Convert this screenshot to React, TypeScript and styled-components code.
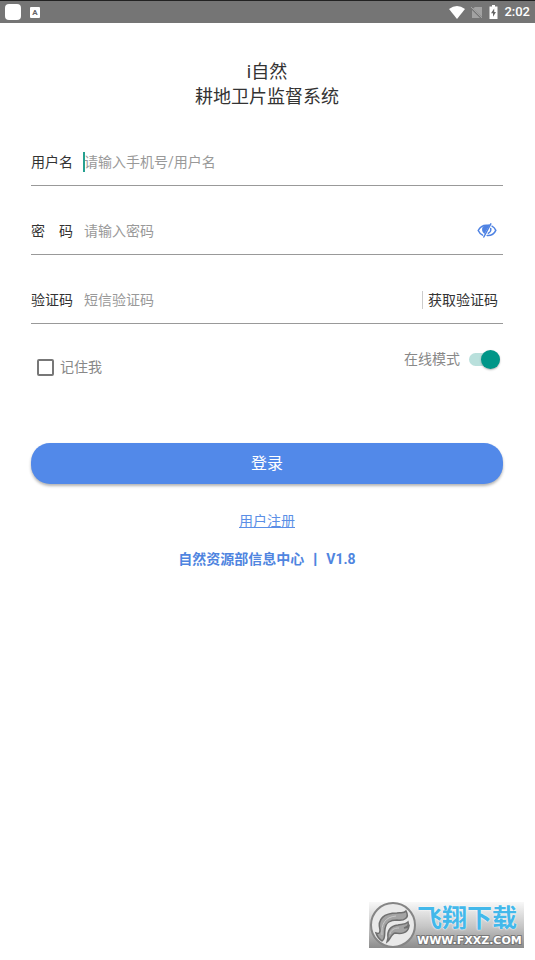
import React, { useState } from 'react';
import styled, { createGlobalStyle } from 'styled-components';

const GlobalStyle = createGlobalStyle`
  *, *::before, *::after { box-sizing: border-box; }
  body {
    margin: 0;
    background: #fff;
    color: #333;
    font: 14px/20px Roboto, "Noto Sans CJK SC", sans-serif;
  }
  button, input { font: inherit; color: inherit; }
`;

const Screen = styled.div`
  position: relative;
  display: flex;
  flex-direction: column;
  min-height: 100vh;
`;

const StatusBar = styled.header`
  display: flex;
  align-items: center;
  justify-content: space-between;
  height: 23px;
  padding: 0 5px;
  border-top: 1px solid #222;
  background: #757575;
  color: #fff;
`;

const StatusGroup = styled.div<{ $gap: number }>`
  display: flex;
  align-items: center;
  gap: ${({ $gap }) => $gap}px;
`;

const AppBadge = styled.span`
  width: 16px;
  height: 16px;
  border-radius: 4px;
  background: #fff;
`;

const LetterBadge = styled.span`
  width: 10px;
  height: 11px;
  border-radius: 1px;
  background: #fff;
  color: #666;
  font-size: 8px;
  font-weight: 700;
  line-height: 11px;
  text-align: center;
`;

const Clock = styled.time`
  font-size: 13px;
  font-weight: 500;
`;

const Main = styled.main`
  display: flex;
  flex-direction: column;
  padding: 36px 32px 32px 31px;
`;

const Title = styled.h1`
  margin: 0 0 30px;
  font-size: 18px;
  font-weight: 400;
  line-height: 25px;
  text-align: center;
`;

const Form = styled.form`
  display: flex;
  flex-direction: column;
`;

const Row = styled.div`
  display: flex;
  align-items: center;
  height: 47px;
  margin-bottom: 22px;
  border-bottom: 1px solid #999;
`;

const RowLabel = styled.label`
  flex: none;
  width: 52px;
  white-space: pre;
`;

const InputWrap = styled.div<{ $active?: boolean }>`
  position: relative;
  flex: 1;
  min-width: 0;
  &::before {
    content: '';
    display: ${({ $active }) => ($active ? 'block' : 'none')};
    position: absolute;
    left: 0;
    top: 0;
    width: 2px;
    height: 20px;
    background: #26a090;
  }
`;

const Input = styled.input`
  display: block;
  width: 100%;
  height: 20px;
  padding: 0 0 0 1px;
  border: 0;
  outline: 0;
  background: transparent;
  &::placeholder { color: #999; opacity: 1; }
`;

const IconButton = styled.button`
  display: flex;
  padding: 0;
  margin-right: 6px;
  border: 0;
  background: none;
  cursor: pointer;
`;

const CodeButton = styled.button`
  height: 18px;
  padding: 0 5px;
  border: 0;
  border-left: 1px solid #ccc;
  background: none;
  line-height: 18px;
  cursor: pointer;
`;

const Options = styled.div`
  display: flex;
  align-items: flex-start;
  justify-content: space-between;
  margin: 3px 3px 66px 6px;
  color: #888;
`;

const Option = styled.label<{ $drop?: boolean }>`
  display: flex;
  align-items: center;
  gap: ${({ $drop }) => ($drop ? 6 : 9)}px;
  padding-top: ${({ $drop }) => ($drop ? 8 : 0)}px;
`;

const Checkbox = styled.input`
  appearance: none;
  width: 17px;
  height: 17px;
  margin: 0;
  border: 2px solid #777;
  border-radius: 2px;
  &:checked { border-color: #009688; background: #009688; }
`;

const Switch = styled.input`
  appearance: none;
  display: flex;
  align-items: center;
  width: 31px;
  height: 13px;
  margin: 0;
  border-radius: 7px;
  background: #b9e0dc;
  &::before {
    content: '';
    flex: none;
    width: 19px;
    height: 19px;
    border-radius: 50%;
    background: #999;
    box-shadow: 0 1px 2px rgba(0, 0, 0, 0.3);
  }
  &:checked { justify-content: flex-end; }
  &:checked::before { background: #009688; }
`;

const LoginButton = styled.button`
  height: 41px;
  border: 0;
  border-radius: 19px;
  background: #5289e9;
  box-shadow: 0 2px 3px rgba(0, 0, 0, 0.3);
  color: #fff;
  font-size: 16px;
  cursor: pointer;
`;

const RegisterLink = styled.a`
  align-self: center;
  margin-top: 27px;
  color: #5b8fe6;
`;

const Copyright = styled.footer`
  display: flex;
  justify-content: center;
  gap: 4px;
  margin-top: 18px;
  color: #4f85e0;
  font-weight: 700;
`;

const Watermark = styled.aside`
  position: absolute;
  right: 11px;
  bottom: 12px;
  display: flex;
  align-items: center;
  width: 155px;
  height: 46px;
  background: linear-gradient(#f8f8f8, #c4c4c4 55%, #8c8c8c);
`;

const WatermarkText = styled.div`
  display: flex;
  flex-direction: column;
  white-space: nowrap;
`;

const SiteName = styled.span`
  color: #43b8ea;
  font-size: 25px;
  font-weight: 700;
  line-height: 32px;
  text-shadow: 0 0 2px #fff, 0 0 1px #fff;
`;

const SiteUrl = styled.span`
  color: #fff;
  font: 700 11px/12px "DejaVu Sans", sans-serif;
  paint-order: stroke fill;
  -webkit-text-stroke: 2px #777;
`;

const WifiIcon = () => (
  <svg width="16" height="13" viewBox="0 0 16 13" aria-hidden="true">
    <path d="M0 3Q8-3 16 3L8 13Z" fill="#fff" />
  </svg>
);

const NoSimIcon = () => (
  <svg width="12" height="13" viewBox="0 0 12 13" aria-hidden="true">
    <path d="M4 1h7v10L2 2.500zM1 4l8 8H1z" fill="#a2a2a2" />
    <path d="M0 1l11 11" stroke="#a2a2a2" strokeWidth="1" />
  </svg>
);

const BatteryIcon = () => (
  <svg width="9" height="14" viewBox="0 0 9 14" aria-hidden="true">
    <path d="M3 0h3v1.500h2.500V14h-8V1.500H3z" fill="#fff" />
    <path d="M5.200 3.500 2 8.300h2v3.500L7 7H5.200z" fill="#666" />
  </svg>
);

const EyeOffIcon = () => (
  <svg width="20" height="16" viewBox="0 0 20 16" fill="none" stroke="#4f83e3" strokeWidth="1.500" strokeLinecap="round" aria-hidden="true">
    <path d="M11.500 2.300C7 1.600 3 3.800 1.200 7.500c1 2.200 2.400 3.600 4.400 4.600" />
    <path d="M15 3.200c1.700.9 3 2.300 3.800 4.200-1.600 3.600-5 5.400-8.600 5.200" />
    <path d="M13.800.9 6.800 14" />
    <path d="M6.300 4.200c-.8 2-.6 4 1 5.600L11.600 2.600z" fill="#4f83e3" />
    <path d="M13.700 5.500c.4 2-.6 3.900-2.400 4.700" />
  </svg>
);

const Emblem = () => (
  <svg width="48" height="46" viewBox="0 0 48 46" aria-hidden="true">
    <circle cx="24" cy="23" r="22" fill="#e9e9e9" stroke="#858585" strokeWidth="2" />
    <path d="M7 31c1 3 3 6 6 8 4-3 2-7 3-12 1-7 5-9 12-9 7 1 13-2 9-9-2 3-6 1-9 2C15 11 8 17 11 28c0 3-1 4-4 3z" fill="#a3a3a3" stroke="#6f6f6f" strokeWidth="1.500" />
    <path d="M18 40c3-2 4-8 8-9 5 1 13 1 14-7-2 2-3 2-5 2 4-1 5-3 4-6-3 3-7 2-10 3-8 1-11 6-10 13z" fill="#a3a3a3" stroke="#6f6f6f" strokeWidth="1.500" />
    <path d="M13 33c-1-11 3-18 14-19M21 32c1-4 4-6 9-6" fill="none" stroke="#c8c8c8" />
  </svg>
);

export default function App() {
  const [visible, setVisible] = useState(false);
  return (
    <>
      <GlobalStyle />
      <Screen>
        <StatusBar>
          <StatusGroup $gap={9}>
            <AppBadge />
            <LetterBadge>A</LetterBadge>
          </StatusGroup>
          <StatusGroup $gap={6}>
            <WifiIcon />
            <NoSimIcon />
            <BatteryIcon />
            <Clock>2:02</Clock>
          </StatusGroup>
        </StatusBar>
        <Main>
          <Title>
            i自然
            <br />
            耕地卫片监督系统
          </Title>
          <Form onSubmit={(e) => e.preventDefault()}>
            <Row>
              <RowLabel htmlFor="user">用户名</RowLabel>
              <InputWrap $active>
                <Input id="user" placeholder="请输入手机号/用户名" />
              </InputWrap>
            </Row>
            <Row>
              <RowLabel htmlFor="password">密　码</RowLabel>
              <InputWrap>
                <Input id="password" type={visible ? 'text' : 'password'} placeholder="请输入密码" />
              </InputWrap>
              <IconButton type="button" aria-label="显示密码" onClick={() => setVisible(!visible)}>
                <EyeOffIcon />
              </IconButton>
            </Row>
            <Row>
              <RowLabel htmlFor="code">验证码</RowLabel>
              <InputWrap>
                <Input id="code" placeholder="短信验证码" />
              </InputWrap>
              <CodeButton type="button">获取验证码</CodeButton>
            </Row>
            <Options>
              <Option $drop>
                <Checkbox type="checkbox" />
                记住我
              </Option>
              <Option>
                在线模式
                <Switch type="checkbox" role="switch" defaultChecked />
              </Option>
            </Options>
            <LoginButton type="submit">登录</LoginButton>
          </Form>
          <RegisterLink href="#register">用户注册</RegisterLink>
          <Copyright>
            <span>自然资源部信息中心</span>
            <span>丨</span>
            <span>V1.8</span>
          </Copyright>
        </Main>
        <Watermark>
          <Emblem />
          <WatermarkText>
            <SiteName>飞翔下载</SiteName>
            <SiteUrl>WWW.FXXZ.COM</SiteUrl>
          </WatermarkText>
        </Watermark>
      </Screen>
    </>
  );
}
